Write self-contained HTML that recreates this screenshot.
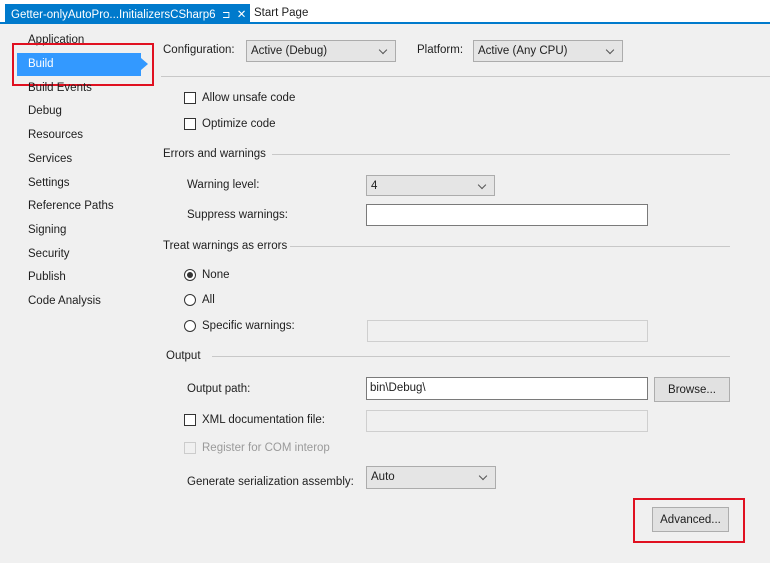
<!DOCTYPE html>
<html><head><style>
*{margin:0;padding:0;box-sizing:border-box}
body{width:770px;height:563px;background:#fff;font-family:"Liberation Sans",sans-serif;font-size:11.5px;color:#1e1e1e;position:relative;overflow:hidden}
.a{position:absolute;white-space:nowrap}
.sel{position:absolute;background:#e5e5e5;border:1px solid #acacac;padding:4px 4px 0}
.sel::after{content:"";position:absolute;right:9px;top:6px;width:5px;height:5px;border-right:1px solid #555;border-bottom:1px solid #555;transform:rotate(45deg)}
.inp{position:absolute;background:#fff;border:1px solid #7a7a7a;padding:4px 3px 0}
.dis{background:#f0f0f0;border-color:#cfcfcf}
.btn{position:absolute;background:#e1e1e1;border:1px solid #adadad;text-align:center;padding-top:6px}
.cb{position:absolute;width:12px;height:12px;border:1px solid #333;background:#fff}
.rb{position:absolute;width:12px;height:12px;border:1px solid #333;border-radius:50%;background:#fff}
.ln{position:absolute;height:1px;background:#c8c8c8}
.nav{position:absolute;left:28px}
</style></head><body>
<div class="a" style="left:0;top:23px;width:770px;height:540px;background:#f0f0f0"></div>
<div class="a" style="left:5px;top:4px;width:245px;height:19px;background:#007acc;color:#fff;padding:3px 0 0 6px;font-size:11.5px">Getter-onlyAutoPro...InitializersCSharp6 &nbsp;<span style="font-size:10px">⊐</span>&nbsp; ✕</div>
<div class="a" style="left:0;top:22px;width:770px;height:2px;background:#007acc"></div>
<div class="a" style="left:254px;top:7px">Start Page</div>

<div class="nav a" style="top:34px">Application</div>
<div class="a" style="left:17px;top:53px;width:124px;height:23px;background:#3399ff"></div>
<div class="a" style="left:141px;top:58px;width:0;height:0;border-top:6px solid transparent;border-bottom:6px solid transparent;border-left:7px solid #3399ff"></div>
<div class="nav a" style="top:58px;color:#fff">Build</div>
<div class="a" style="left:12px;top:43px;width:142px;height:43px;border:2.5px solid #e01020"></div>
<div class="nav a" style="top:82px">Build Events</div>
<div class="nav a" style="top:105px">Debug</div>
<div class="nav a" style="top:129px">Resources</div>
<div class="nav a" style="top:153px">Services</div>
<div class="nav a" style="top:177px">Settings</div>
<div class="nav a" style="top:200px">Reference Paths</div>
<div class="nav a" style="top:224px">Signing</div>
<div class="nav a" style="top:248px">Security</div>
<div class="nav a" style="top:271px">Publish</div>
<div class="nav a" style="top:295px">Code Analysis</div>

<div class="a" style="left:163px;top:44px">Configuration:</div>
<div class="sel" style="left:246px;top:40px;width:150px;height:22px">Active (Debug)</div>
<div class="a" style="left:417px;top:44px">Platform:</div>
<div class="sel" style="left:473px;top:40px;width:150px;height:22px">Active (Any CPU)</div>
<div class="ln" style="left:161px;top:76px;width:609px"></div>

<div class="cb" style="left:184px;top:92px"></div><div class="a" style="left:202px;top:92px">Allow unsafe code</div>
<div class="cb" style="left:184px;top:118px"></div><div class="a" style="left:202px;top:118px">Optimize code</div>

<div class="a" style="left:163px;top:148px">Errors and warnings</div><div class="ln" style="left:272px;top:154px;width:458px"></div>
<div class="a" style="left:187px;top:179px">Warning level:</div>
<div class="sel" style="left:366px;top:175px;width:129px;height:21px">4</div>
<div class="a" style="left:187px;top:209px">Suppress warnings:</div>
<div class="inp" style="left:366px;top:204px;width:282px;height:22px"></div>

<div class="a" style="left:163px;top:240px">Treat warnings as errors</div><div class="ln" style="left:290px;top:246px;width:440px"></div>
<div class="rb" style="left:184px;top:269px"></div><div class="a" style="left:187px;top:272px;width:6px;height:6px;border-radius:50%;background:#333"></div>
<div class="a" style="left:202px;top:269px">None</div>
<div class="rb" style="left:184px;top:294px"></div><div class="a" style="left:202px;top:294px">All</div>
<div class="rb" style="left:184px;top:320px"></div><div class="a" style="left:202px;top:320px">Specific warnings:</div>
<div class="inp dis" style="left:367px;top:320px;width:281px;height:22px"></div>

<div class="a" style="left:166px;top:350px">Output</div><div class="ln" style="left:212px;top:356px;width:518px"></div>
<div class="a" style="left:187px;top:383px">Output path:</div>
<div class="inp" style="left:366px;top:377px;width:282px;height:23px">bin\Debug\</div>
<div class="btn" style="left:654px;top:377px;width:76px;height:25px">Browse...</div>
<div class="cb" style="left:184px;top:414px"></div><div class="a" style="left:202px;top:414px">XML documentation file:</div>
<div class="inp dis" style="left:366px;top:410px;width:282px;height:22px"></div>
<div class="cb" style="left:184px;top:442px;border-color:#ccc;background:#f0f0f0"></div><div class="a" style="left:202px;top:442px;color:#9a9a9a">Register for COM interop</div>
<div class="a" style="left:187px;top:476px">Generate serialization assembly:</div>
<div class="sel" style="left:366px;top:466px;width:130px;height:23px">Auto</div>

<div class="btn" style="left:652px;top:507px;width:77px;height:25px">Advanced...</div>
<div class="a" style="left:633px;top:498px;width:112px;height:45px;border:2.5px solid #e01020"></div>
</body></html>
